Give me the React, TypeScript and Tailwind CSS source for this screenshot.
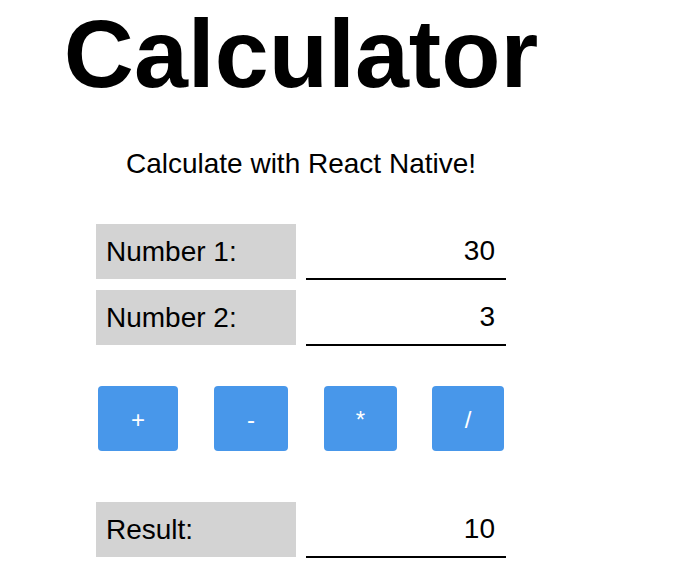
import React from "react";

const font = { fontFamily: '"Liberation Sans", Arial, sans-serif' };

function Row({ label, value }: { label: string; value: string }) {
  return (
    <div className="flex flex-row gap-[10px]">
      <div className="w-[200px] h-[55px] bg-[#d3d3d3] flex items-center pl-[10px] pt-[2px] text-[28px] text-black">
        {label}
      </div>
      <div className="w-[200px] h-[56px] border-b-2 border-black flex items-center justify-end pr-[11px] pt-[1px] text-[28px] text-black">
        {value}
      </div>
    </div>
  );
}

function Btn({ label, cls }: { label: string; cls: string }) {
  return (
    <div className={`${cls} h-[65px] bg-[#4897ea] rounded-[4px] flex items-center justify-center pt-[3px] text-white text-[24px]`}>
      {label}
    </div>
  );
}

export default function App() {
  return (
    <div className="w-[692px] h-[582px] bg-white overflow-hidden" style={font}>
      <div className="w-[602px] flex flex-col items-center">
        <h1 className="mt-0 text-[97px] font-bold leading-[1.12] text-black">Calculator</h1>
        <p className="mt-[39px] text-[28px] leading-[1.15] text-black">Calculate with React Native!</p>
        <div className="mt-[44px] flex flex-col gap-[10px]">
          <Row label="Number 1:" value="30" />
          <Row label="Number 2:" value="3" />
        </div>
        <div className="mt-[40px] w-[410px] flex flex-row pl-[2px]">
          <Btn label="+" cls="w-[80px]" />
          <Btn label="-" cls="w-[74px] ml-[36px]" />
          <Btn label="*" cls="w-[73px] ml-[36px]" />
          <Btn label="/" cls="w-[72px] ml-[35px]" />
        </div>
        <div className="mt-[51px]">
          <Row label="Result:" value="10" />
        </div>
      </div>
    </div>
  );
}
